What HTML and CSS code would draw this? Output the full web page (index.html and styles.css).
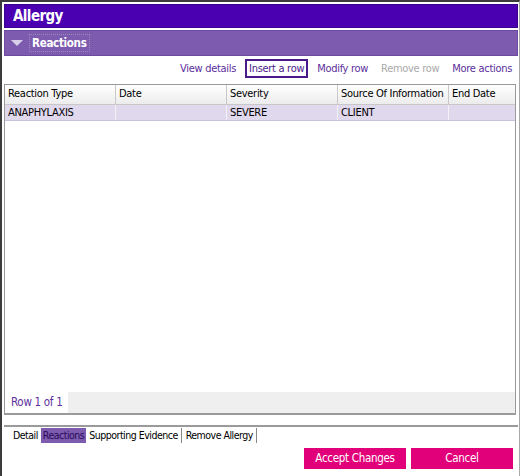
FILE: index.html
```html
<!DOCTYPE html>
<html>
<head>
<meta charset="utf-8">
<title>Allergy</title>
<link rel="stylesheet" href="styles.css">
</head>
<body>
<div id="window">
  <div class="titlebar">Allergy</div>
  <div class="section">
    <span class="arrow"></span>
    <span class="sectionLabel">Reactions</span>
  </div>
  <div class="toolbar">
    <a href="#">View details</a>
    <a href="#" class="active">Insert a row</a>
    <a href="#">Modify row</a>
    <a href="#" class="disabled">Remove row</a>
    <a href="#">More actions</a>
  </div>
  <div class="grid">
    <div class="row head">
      <div class="cell">Reaction Type</div>
      <div class="cell">Date</div>
      <div class="cell">Severity</div>
      <div class="cell">Source Of Information</div>
      <div class="cell last">End Date</div>
    </div>
    <div class="row data">
      <div class="cell">ANAPHYLAXIS</div>
      <div class="cell"></div>
      <div class="cell">SEVERE</div>
      <div class="cell">CLIENT</div>
      <div class="cell last"></div>
    </div>
    <div class="gridBody"></div>
    <div class="gridFoot">
      <span class="count">Row 1 of 1</span>
      <span class="footFill"></span>
    </div>
  </div>
  <div class="tabs">
    <span class="tab">Detail</span>
    <span class="tab current">Reactions</span>
    <span class="tab sep">Supporting Evidence</span>
    <span class="tab sep">Remove Allergy</span>
  </div>
  <div class="buttons">
    <a href="#" class="btn">Accept Changes</a>
    <a href="#" class="btn">Cancel</a>
  </div>
</div>
</body>
</html>
```

FILE: styles.css
```css
html, body { margin: 0; padding: 0; background: #ffffff; }
body { font-family: Tahoma, "DejaVu Sans Condensed", "Liberation Sans", sans-serif; font-size: 11px; letter-spacing: -0.3px; color: #000; }
#window { width: 520px; height: 476px; border-top: 2px solid #3c3c3c; border-left: 2px solid #3c3c3c; border-right: 1px solid #a8a8a8; display: flex; flex-direction: column; padding: 2px 1px 0 2px; box-sizing: border-box; }
a { text-decoration: none; }

.titlebar { height: 22px; background: #4a00b0; border: 1px solid #3a0090; color: #fff; font-weight: bold; font-size: 15px; letter-spacing: -0.6px; line-height: 22px; padding-left: 8px; }
.section { height: 24px; margin-top: 2px; background: #7d5caf; border: 1px solid #6c4aa0; display: flex; align-items: center; padding-left: 6px; }
.arrow { width: 0; height: 0; border-left: 6px solid transparent; border-right: 6px solid transparent; border-top: 6px solid #d8d0ea; margin-right: 6px; }
.sectionLabel { color: #fff; font-weight: bold; font-size: 11.5px; border: 1px dotted #9a88c0; padding: 1px 2px; }

.toolbar { display: flex; justify-content: flex-end; margin-top: 3px; height: 19px; align-items: center; padding-right: 2px; }
.toolbar a { color: #5b2e9c; font-size: 11px; margin-left: 5px; padding: 1px 2px; border: 2px solid transparent; }
.toolbar a.active { border-color: #4a1a8a; color: #4a1a8a; }
.toolbar a.disabled { color: #aaa; }

.grid { margin-top: 6px; width: 512px; height: 331px; border: 1px solid #9a9a9a; border-bottom: 2px solid #9a9a9a; box-sizing: border-box; display: flex; flex-direction: column; }
.row { display: flex; }
.cell { width: 111px; box-sizing: border-box; padding-left: 3px; border-right: 1px solid #c8c8c8; white-space: nowrap; overflow: hidden; }
.cell.last { flex: 1; border-right: none; }
.head { height: 19px; line-height: 18px; background: linear-gradient(#ffffff, #ececec); border-bottom: 1px solid #c8c8c8; }
.data { height: 15px; line-height: 15px; background: #e0d8ec; border-bottom: 1px solid #c8c0d8; }
.data .cell { border-right-color: #f4f0f8; }
.gridBody { flex: 1; }
.gridFoot { height: 21px; display: flex; }
.count { color: #5b2e9c; font-size: 11.5px; line-height: 21px; padding: 0 6px; width: 51px; white-space: nowrap; }
.footFill { flex: 1; background: #efefef; }

.tabs { margin-top: 10px; border-top: 2px solid #9a9a9a; padding: 1px 0 0 7px; display: flex; font-size: 10.5px; letter-spacing: -0.5px; }
.tab { padding: 1px 2px; line-height: 13px; }
.tab.current { background: #7d5caf; color: #2a0a5a; margin: 0 1px; }
.tab.sep { border-right: 1px solid #888; padding-right: 3px; margin-right: 2px; }

.buttons { display: flex; justify-content: flex-end; gap: 5px; margin-top: 5px; padding-right: 5px; }
.btn { width: 102px; height: 21px; line-height: 21px; text-align: center; background: #e2007a; color: #fff; font-size: 11.5px; }
```
